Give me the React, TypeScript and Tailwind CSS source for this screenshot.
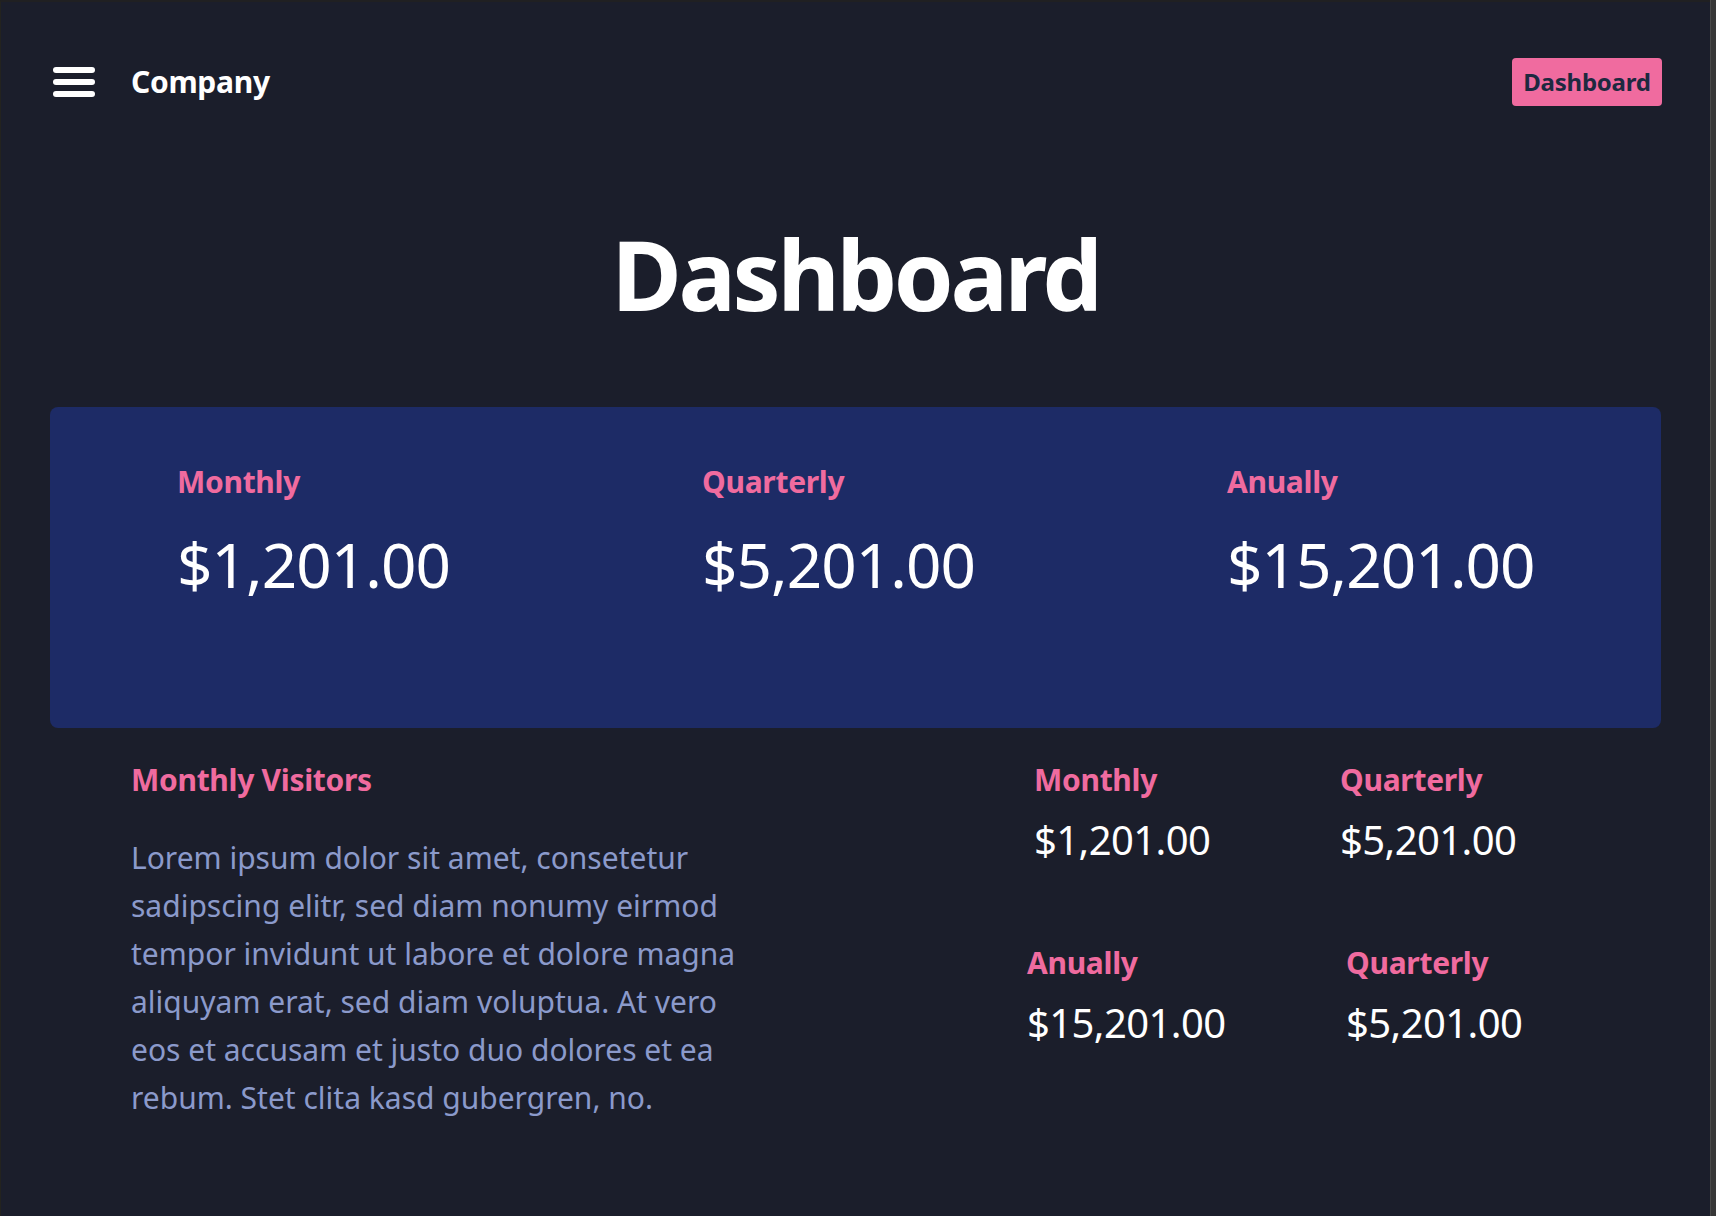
import React from "react";

const Stat = ({ label, value, className = "" }: { label: string; value: string; className?: string }) => (
  <div className={className}>
    <div className="text-[30px] leading-[40px] font-bold text-[#f06b9f] tracking-[-0.01em]">{label}</div>
    <div className="mt-[20px] text-[40px] leading-[40px] text-white tracking-[-0.015em]">{value}</div>
  </div>
);

const BigStat = ({ label, value }: { label: string; value: string }) => (
  <div>
    <div className="text-[30px] leading-[40px] font-bold text-[#f06b9f] tracking-[-0.01em]">{label}</div>
    <div className="mt-[31px] text-[62px] leading-[62px] text-white tracking-[-0.015em]">{value}</div>
  </div>
);

export default function App() {
  const lines = [
    "Lorem ipsum dolor sit amet, consetetur",
    "sadipscing elitr, sed diam nonumy eirmod",
    "tempor invidunt ut labore et dolore magna",
    "aliquyam erat, sed diam voluptua. At vero",
    "eos et accusam et justo duo dolores et ea",
    "rebum. Stet clita kasd gubergren, no.",
  ];
  return (
    <div className="w-[1716px] h-[1216px] flex font-['Noto_Sans',sans-serif] overflow-hidden">
      <main className="flex-1 bg-[#1b1e2b] border-t-2 border-l border-t-[#202022] border-l-[#23231f] flex flex-col">
        <header className="flex items-center justify-between pl-[52px] pr-[48px] pt-[56px]">
          <div className="flex items-center gap-[36px]">
            <div className="w-[42px] h-[30px] flex flex-col justify-between">
              <span className="block h-[6px] rounded-full bg-white" />
              <span className="block h-[6px] rounded-full bg-white" />
              <span className="block h-[6px] rounded-full bg-white" />
            </div>
            <span className="text-[30px] leading-[40px] font-bold text-white tracking-[-0.01em]">Company</span>
          </div>
          <button className="w-[150px] h-[48px] rounded-[4px] bg-[#f06b9f] text-[#1e2940] text-[24px] font-bold flex items-center justify-center tracking-[-0.01em]">
            Dashboard
          </button>
        </header>

        <h1 className="mt-[120px] text-center text-[96px] leading-[96px] font-bold text-white tracking-[-0.035em]">
          Dashboard
        </h1>

        <section className="mt-[85px] mx-[49px] h-[321px] rounded-[8px] bg-[#1d2b66] pl-[127px] pt-[55px] grid grid-cols-[525px_525px_1fr] items-start">
          <BigStat label="Monthly" value="$1,201.00" />
          <BigStat label="Quarterly" value="$5,201.00" />
          <BigStat label="Anually" value="$15,201.00" />
        </section>

        <section className="mt-[32px] pl-[130px] flex items-start">
          <div className="w-[903px]">
            <h2 className="text-[30px] leading-[40px] font-bold text-[#f06b9f] tracking-[-0.01em]">Monthly Visitors</h2>
            <p className="mt-[34px] text-[30px] leading-[48px] text-[#8b9acb]">
              {lines.map((l) => (
                <span key={l} className="block whitespace-nowrap">{l}</span>
              ))}
            </p>
          </div>
          <div className="grid grid-cols-[306px_auto] gap-y-[83px]">
            <Stat label="Monthly" value="$1,201.00" />
            <Stat label="Quarterly" value="$5,201.00" />
            <Stat label="Anually" value="$15,201.00" className="-ml-[7px]" />
            <Stat label="Quarterly" value="$5,201.00" className="ml-[6px]" />
          </div>
        </section>
      </main>
      <div className="w-[6px] bg-[#373737] border-l border-l-[#4a4a4a]" />
    </div>
  );
}
